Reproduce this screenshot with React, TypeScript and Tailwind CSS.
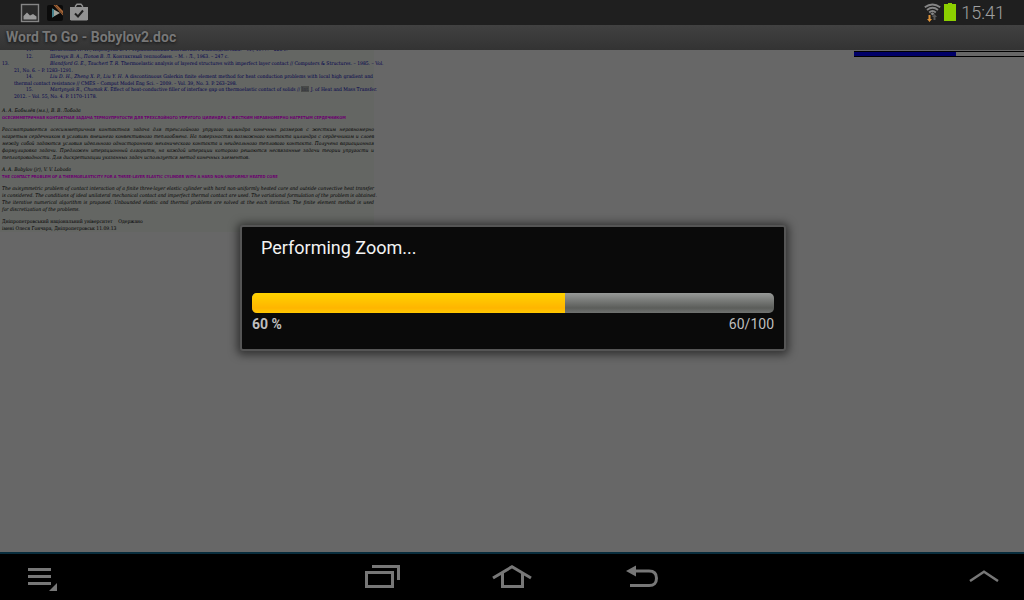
import type { ReactNode } from "react";

const ROBOTO = "font-['Roboto','Noto_Sans',sans-serif]";

/* One line of the miniature document; full lines are stretched to both margins. */
function Line({ full = false, indent = false, children }: { full?: boolean; indent?: boolean; children: ReactNode }) {
  return (
    <span
      className={`block whitespace-nowrap ${full ? "[text-align-last:justify]" : ""} ${indent ? "pl-6" : ""}`}
    >
      {children}
    </span>
  );
}

function Num({ wide = false, children }: { wide?: boolean; children: ReactNode }) {
  return <span className={`inline-block [text-align-last:left] ${wide ? "w-12" : "w-6"}`}>{children}</span>;
}

function DocumentPage() {
  return (
    <article
      lang="ru"
      className="flex w-[374px] shrink-0 flex-col gap-[5px] bg-[#646663] pl-[2px] font-['DejaVu_Serif_Condensed','Liberation_Serif',serif] text-[5px] leading-[7px] text-black"
    >
      <div className="-mt-1 mb-[2px] pr-px text-[#00004c]">
        <p>
          <Line indent><Num>11.</Num><i>Шевельова Н. Н., Карнаухов В. Г.</i> Термомеханика контактного взаимодействия. – М., 1977. – 228 с.</Line>
        </p>
        <p>
          <Line indent><Num>12.</Num><i>Шевчук В. А., Попов В. Л.</i> Контактный теплообмен. – М. : Л., 1963. – 247 с.</Line>
        </p>
        <p>
          <Line full><Num wide>13.</Num><i>Blandford G. E., Tauchert T. R.</i> Thermoelastic analysis of layered structures with imperfect layer contact // Computers &amp; Structures. – 1985. – Vol.</Line>
          <span className="block pl-3">21, No. 6. – P. 1283–1291.</span>
        </p>
        <p className="-mt-px">
          <Line full indent><Num>14.</Num><i>Liu D. H., Zheng X. P., Liu Y. H.</i> A discontinuous Galerkin finite element method for heat conduction problems with local high gradient and</Line>
          <span className="block pl-3">thermal contact resistance // CMES – Comput Model Eng Sci. – 2009. – Vol. 39, No. 3. P. 263–298.</span>
        </p>
        <p className="-mt-px">
          <Line indent><Num>15.</Num><i>Martynyak R., Chumak K.</i> Effect of heat-conductive filler of interface gap on thermoelastic contact of solids // <mark className="bg-[#484a48] text-[#2c2c38]">Int.</mark> J. of Heat and Mass Transfer.</Line>
          <span className="block pl-3">2012. – Vol. 55, No. 4. P. 1170–1178.</span>
        </p>
      </div>
      <div>
        <p><Line><i>А. А. Бобылёв (мл.), В. В. Лобода</i></Line></p>
        <h2 className="whitespace-nowrap font-['DejaVu_Sans_Condensed',sans-serif] text-[4px] font-bold text-[#6c0070]">
          ОСЕСИММЕТРИЧНАЯ КОНТАКТНАЯ ЗАДАЧА ТЕРМОУПРУГОСТИ ДЛЯ ТРЕХСЛОЙНОГО УПРУГОГО ЦИЛИНДРА С ЖЕСТКИМ НЕРАВНОМЕРНО НАГРЕТЫМ СЕРДЕЧНИКОМ
        </h2>
      </div>
      <p className="italic">
        <Line full>Рассматривается осесимметричная контактная задача для трехслойного упругого цилиндра конечных размеров с жестким неравномерно</Line>
        <Line full>нагретым сердечником в условиях внешнего конвективного теплообмена. На поверхностях возможного контакта цилиндра с сердечником и слоев</Line>
        <Line full>между собой задаются условия идеального одностороннего механического контакта и неидеального теплового контакта. Получена вариационная</Line>
        <Line full>формулировка задачи. Предложен итерационный алгоритм, на каждой итерации которого решаются несвязанные задачи теории упругости и</Line>
        <Line>теплопроводности. Для дискретизации указанных задач используется метод конечных элементов.</Line>
      </p>
      <div>
        <p><Line><i>A. A. Bobylov (jr), V. V. Loboda</i></Line></p>
        <h2 lang="en" className="whitespace-nowrap font-['DejaVu_Sans_Condensed',sans-serif] text-[4px] font-bold text-[#6c0070]">
          THE CONTACT PROBLEM OF A THERMOELASTICITY FOR A THREE-LAYER ELASTIC CYLINDER WITH A HARD NON-UNIFORMLY HEATED CORE
        </h2>
      </div>
      <p lang="en" className="italic">
        <Line full>The axisymmetric problem of contact interaction of a finite three-layer elastic cylinder with hard non-uniformly heated core and outside convective heat transfer</Line>
        <Line full>is considered. The conditions of ideal unilateral mechanical contact and imperfect thermal contact are used. The variational formulation of the problem is obtained.</Line>
        <Line full>The iterative numerical algorithm is proposed. Unbounded elastic and thermal problems are solved at the each iteration. The finite element method is used</Line>
        <Line>for discretization of the problems.</Line>
      </p>
      <p lang="uk">
        <Line>Дніпропетровський національний університет&nbsp;&nbsp;&nbsp;&nbsp;Одержано</Line>
        <Line>імені Олеся Гончара, Дніпропетровськ 11.09.13</Line>
      </p>
    </article>
  );
}

function StatusBar() {
  return (
    <header className="flex h-[25px] shrink-0 items-center justify-between bg-[#1f1f1f] pr-[19px] pl-5">
      <div className="flex items-center gap-[7px]">
        <svg width="20" height="20" viewBox="0 0 20 20" aria-hidden="true">
          <rect x="1.5" y="1.5" width="17" height="17" fill="#2a2a2a" stroke="#858585" strokeWidth="1.4" />
          <path d="M3.500 16.500v-3.500L7 9.500l3 3 3-1.500 3.500 2.500v3z" fill="#9a9a9a" />
        </svg>
        <svg width="16" height="18" viewBox="0 0 16 18" aria-hidden="true">
          <rect y="1" width="16" height="16" rx="2" fill="#0b0b0b" />
          <path d="M6.500 1H10l6 6v4.500z" fill="#a8683a" />
          <path d="M8 1l8 9" stroke="#5e381d" strokeWidth=".8" />
          <path d="M5 4.500l8 4.500-8 4.500z" fill="#a3a49c" />
          <path d="M5 4.500v9l2-1V5.500z" fill="#447f8b" />
        </svg>
        <svg width="18" height="20" viewBox="0 0 18 20" aria-hidden="true">
          <path d="M5.500 5V3l1.500-1.700h4L12.500 3v2" fill="none" stroke="#909090" strokeWidth="1.400" />
          <path d="M0 4h18v12.500l-1 1H1l-1-1z" fill="#929292" />
          <path d="M5 10.500l3 3 5-6" fill="none" stroke="#202020" strokeWidth="2" />
        </svg>
      </div>
      <div className="flex items-center gap-[3px]">
        <svg width="17" height="20" viewBox="0 0 17 20" aria-hidden="true">
          <g fill="none" stroke="#858585" strokeWidth="1.900">
            <path d="M.8 4.200q7.700-5.500 15.400 0" />
            <path d="M3 6.900q5.500-4.300 11 0" />
            <path d="M5.200 9.400q3.300-2.600 6.600 0" />
          </g>
          <path d="M6.500 10.800l2-1.500 2 1.500-2 1.700z" fill="#858585" />
          <path d="M4.500 12h2v4H8l-2.500 3L3 16h1.500z" fill="#dd9238" />
          <path d="M9.500 17v-3H8l2.500-3 2.500 3h-1.500v3z" fill="#575757" />
        </svg>
        <svg width="12" height="20" viewBox="0 0 12 20" aria-hidden="true">
          <path d="M4 0h4v1h4v17H0V1h4z" fill="#8ccf00" />
        </svg>
        <time className="pl-[2px] text-[18px] leading-6 font-light text-[#a0a0a0]">15:41</time>
      </div>
    </header>
  );
}

function ProgressDialog({ title, value, max }: { title: string; value: number; max: number }) {
  const percent = Math.round((value / max) * 100);
  return (
    <div className="absolute inset-x-0 top-[25px] bottom-[50px] flex items-center justify-center pl-[2px]">
      <section
        role="dialog"
        aria-labelledby="dialog-title"
        className="w-[546px] max-w-full rounded-[3px] border-2 border-[#555] bg-[#0a0a0a] px-[10px] pb-[15px] shadow-[0_1px_9px_3px_rgba(0,0,0,0.5)]"
      >
        <h1 id="dialog-title" className="px-[9px] pt-[9px] text-[18px] leading-6 text-[#f2f2f2]">
          {title}
        </h1>
        <div
          role="progressbar"
          aria-labelledby="dialog-title"
          aria-valuenow={value}
          aria-valuemax={max}
          className="mt-[33px] h-5 overflow-hidden rounded-[5px] bg-linear-to-b from-[#989a98] via-[#5b5d5a] via-75% to-[#717371]"
        >
          <div
            className="h-full bg-linear-to-b from-[#ffd300] via-[#ffb500] via-75% to-[#ffc800]"
            style={{ width: `${percent}%` }}
          />
        </div>
        <div className="flex justify-between pt-px text-sm leading-[20px] text-[#bebebe]">
          <span className="font-bold">{percent} %</span>
          <span>{value}/{max}</span>
        </div>
      </section>
    </div>
  );
}

function NavigationBar() {
  return (
    <nav className="grid h-12 shrink-0 grid-cols-[1fr_auto_1fr] border-t-2 border-[#092d3d] bg-black pb-[2px] text-[#777]">
      <button aria-label="Menu" className="flex items-center pl-7">
        <svg width="30" height="30" viewBox="0 0 30 30" fill="currentColor" aria-hidden="true">
          <path d="M0 7h23v3H0zM0 14h23v3H0zM0 21h23v3H0zM29 22v8h-8z" />
        </svg>
      </button>
      <div className="flex">
        <button aria-label="Recent apps" className="flex w-[130px] items-center justify-center">
          <svg width="36" height="24" viewBox="0 0 36 24" fill="none" stroke="currentColor" strokeWidth="3" aria-hidden="true">
            <path d="M2.500 8.500h26v14h-26z" />
            <path d="M8 2.500h26.500V16" />
          </svg>
        </button>
        <button aria-label="Home" className="flex w-[130px] items-center justify-center">
          <svg width="40" height="24" viewBox="0 0 40 24" fill="none" stroke="currentColor" strokeWidth="3" aria-hidden="true">
            <path d="M1 14L20 2.700 39 14" />
            <path d="M10.500 9v13.500h20V9" />
          </svg>
        </button>
        <button aria-label="Back" className="flex w-[130px] items-center justify-center">
          <svg width="32" height="24" viewBox="0 0 32 24" fill="none" stroke="currentColor" strokeWidth="3" aria-hidden="true">
            <path d="M8 7h15q7.500 0 7.500 7.300T23 21.500H4" />
            <path d="M0 7l10-5.500v11z" fill="currentColor" stroke="none" />
          </svg>
        </button>
      </div>
      <button aria-label="Expand" className="flex items-center justify-end pr-[25px]">
        <svg width="30" height="12" viewBox="0 0 30 12" fill="none" stroke="currentColor" strokeWidth="2.500" aria-hidden="true">
          <path d="M1 11L15 1.800 29 11" />
        </svg>
      </button>
    </nav>
  );
}

export default function App() {
  return (
    <div className={`relative flex min-h-screen flex-col bg-[#676767] ${ROBOTO}`}>
      <StatusBar />
      <div className="h-[25px] shrink-0 bg-linear-to-b from-[#414141] to-[#333] pl-[6px] text-sm leading-[25px] font-bold text-[#777] [text-shadow:0_1px_3px_#111]">
        Word To Go - Bobylov2.doc
      </div>
      <main className="flex flex-1 items-start justify-between overflow-hidden">
        <DocumentPage />
        <div className="mt-px h-[6px] w-[170px] border-y border-black" aria-hidden="true">
          <div className="h-full w-3/5 bg-[#000068]" />
        </div>
      </main>
      <NavigationBar />
      <ProgressDialog title="Performing Zoom..." value={60} max={100} />
    </div>
  );
}
